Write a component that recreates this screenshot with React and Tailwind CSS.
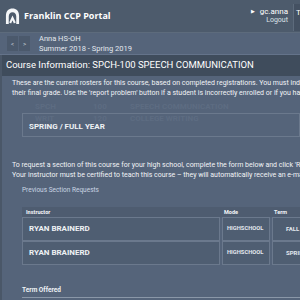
export default function App() {
  const font = { fontFamily: "Roboto, 'Noto Sans', sans-serif" };
  return (
    <div className="w-[300px] h-[300px] overflow-hidden bg-[#4a5768] text-white" style={font}>
      {/* top header */}
      <div className="h-[33px] flex items-center bg-[#4d5b6c] border-b border-[#5d6b7c] pl-[5px]">
        <svg width="15" height="16" viewBox="0 0 16 17" className="shrink-0">
          <path d="M1 17 V8 C1 3 4 0.5 8 0.5 C12 0.5 15 3 15 8 V17 H12 V9 C12 6.5 10.5 4.5 8 4.5 C5.5 4.5 4 6.5 4 9 V17 Z" fill="#f4f6f8" />
          <path d="M5.5 16 L8 10.5 L10.5 16" stroke="#f4f6f8" strokeWidth="2.2" fill="none" />
        </svg>
        <div className="ml-[4px] text-[9px] font-bold text-white" style={{ fontFamily: "'Open Sans', sans-serif" }}>Franklin CCP Portal</div>
        <div className="ml-auto flex flex-col items-end mr-[5px] leading-[9px]">
          <div className="flex items-center text-[8px] text-white"><span className="text-[5px] mr-[5px]">▶</span>gc.anna</div>
          <div className="text-[7px] text-[#dde3ea]">Logout</div>
        </div>
        <div className="self-stretch mt-[4px] mb-[1px] w-[7px] shrink-0 bg-[#445162] border-l border-[#5d6b7c] text-[8px] pl-[2px] pt-[3px]">T</div>
      </div>
      {/* subheader */}
      <div className="h-[22px] flex items-center bg-[#55647a] border-b border-[#64738a] pl-[7px]">
        <div className="flex h-[15px]">
          <div className="w-[11px] bg-[#4b596c] flex items-center justify-center text-[6px] text-[#cfd6de]">&lt;</div>
          <div className="w-[11px] ml-[1px] bg-[#4b596c] flex items-center justify-center text-[6px] text-[#cfd6de]">&gt;</div>
        </div>
        <div className="ml-[9px] text-[7.5px] leading-[10px] text-[#e3e8ee]">
          <div>Anna HS-OH</div>
          <div>Summer 2018 - Spring 2019</div>
        </div>
      </div>
      {/* modal */}
      <div className="ml-[2px] bg-[#55647a] h-[245px]">
        <div className="h-[21px] bg-[#3f4c5c] flex items-center pl-[4px] text-[9.5px] text-white whitespace-nowrap">Course Information: SPCH-100 SPEECH COMMUNICATION</div>
        <div className="pl-[10px] pt-[2px] text-[7px] leading-[10px] text-[#f1f3f6] whitespace-nowrap">
          <div>These are the current rosters for this course, based on completed registrations. You must individually</div>
          <div>their final grade. Use the 'report problem' button if a student is incorrectly enrolled or if you have</div>
        </div>
        <div className="relative ml-[20px] mt-[15px] h-[24px] border border-[#6b798d] flex items-center pl-[6px] text-[8px] font-bold text-[#eef1f4]">
          <div className="absolute left-[12px] top-[-13px] flex text-[8px] text-[#66758a] opacity-50 whitespace-nowrap">
            <span className="w-[58px]">SPCH</span><span className="w-[37px]">100</span><span>SPEECH COMMUNICATION</span>
          </div>
          <div className="absolute left-[12px] top-[-1px] flex text-[8px] text-[#66758a] opacity-50 whitespace-nowrap">
            <span className="w-[58px]">WRIT</span><span className="w-[37px]">120</span><span>COLLEGE WRITING</span>
          </div>
          <span className="relative mt-[3px]">SPRING / FULL YEAR</span>
        </div>
        <div className="pl-[10px] mt-[23px] text-[7px] leading-[10px] text-[#f1f3f6] whitespace-nowrap">
          <div>To request a section of this course for your high school, complete the form below and click 'Request</div>
          <div>Your instructor must be certified to teach this course – they will automatically receive an e-mail</div>
        </div>
        <div className="pl-[20px] mt-[6px] text-[6.5px] text-[#c9d4e3]">Previous Section Requests</div>
        <div className="ml-[20px] mt-[11px]">
          <div className="h-[10px] bg-[#4e5c70] flex items-center text-[5.5px] font-bold text-[#f3f5f8]">
            <div className="w-[200px] shrink-0 pl-[4px]">Instructor</div>
            <div className="w-[50px] shrink-0 pl-[2px]">Mode</div>
            <div className="pl-[2px]">Term</div>
          </div>
          {["FALL", "SPRING"].map((t) => (
            <div key={t} className="flex h-[24px]">
              <div className="w-[198px] shrink-0 border border-[#6b798d] bg-[#4f5e72] flex items-center pl-[6px] text-[8px] font-bold text-[#eef1f4]">RYAN BRAINERD</div>
              <div className="w-[48px] shrink-0 ml-[2px] border border-[#6b798d] bg-[#4f5e72] flex items-center pl-[4px] text-[5.8px] font-bold text-[#e3e8ee]">HIGHSCHOOL</div>
              <div className="w-[40px] shrink-0 ml-[2px] border border-[#6b798d] bg-[#4f5e72] flex items-center pl-[13px] text-[6px] font-bold text-[#e3e8ee] whitespace-nowrap">{t}</div>
            </div>
          ))}
        </div>
        <div className="pl-[20px] mt-[21px] text-[6.5px] font-bold text-[#eef1f4]">Term Offered</div>
        <div className="ml-[20px] mt-[1px] h-[10px] border-t border-[#8a97a8]"></div>
      </div>
    </div>
  );
}
